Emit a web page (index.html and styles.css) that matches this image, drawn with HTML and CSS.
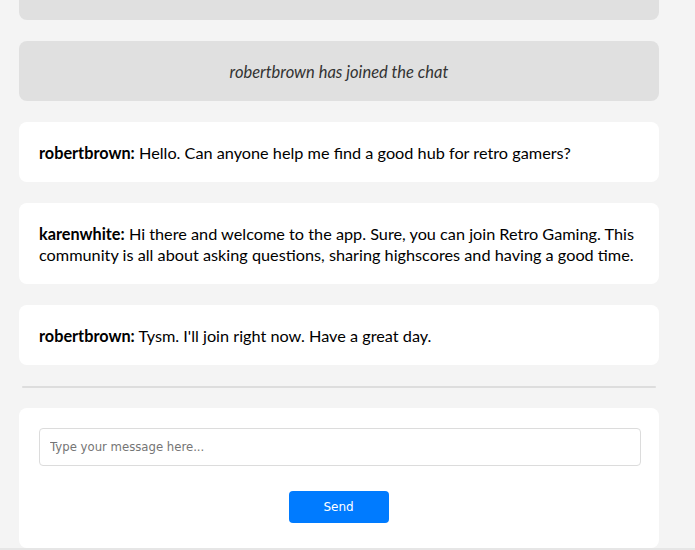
FILE: index.html
```html
<!DOCTYPE html>
<html lang="en">
<head>
<meta charset="utf-8">
<title>Chat</title>
<link rel="stylesheet" href="styles.css">
</head>
<body>
<div class="page">
  <div class="messages">
    <div class="msg system top"><strong>Group chat</strong></div>
    <div class="msg system"><em>robertbrown has joined the chat</em></div>
    <div class="msg"><strong>robertbrown:</strong> Hello. Can anyone help me find a good hub for retro gamers?</div>
    <div class="msg"><strong>karenwhite:</strong> Hi there and welcome to the app. Sure, you can join Retro Gaming. This community is all about asking questions, sharing highscores and having a good time.</div>
    <div class="msg"><strong>robertbrown:</strong> Tysm. I'll join right now. Have a great day.</div>
  </div>
  <div class="divider"></div>
  <form class="composer">
    <input class="field" type="text" placeholder="Type your message here...">
    <button class="send" type="button">Send</button>
  </form>
</div>
</body>
</html>
```
FILE: styles.css
```css
html, body {
  margin: 0;
  padding: 0;
  height: 550px;
  overflow: hidden;
}
body {
  background: #f4f4f4;
  font-family: Lato, "Noto Sans", sans-serif;
  font-size: 16.25px;
  color: #000;
  border-bottom: 2px solid #e6e6e6;
  box-sizing: border-box;
}
.page {
  width: 640px;
  margin-left: 19px;
}
.messages {
  display: flex;
  flex-direction: column;
  gap: 21px;
  margin-top: -40px;
}
.msg {
  background: #fff;
  border-radius: 8px;
  padding: 21.25px 18px 18.25px 20px;
  line-height: 20.5px;
}
.msg strong {
  font-weight: 700;
}
.system {
  background: #e0e0e0;
  text-align: center;
  color: #333;
  padding-left: 20px;
  padding-right: 20px;
  font-size: 16.5px;
}
.system em {
  font-style: italic;
}
.top {
  color: #222;
}
.divider {
  height: 2px;
  background: #dddddd;
  margin: 21px 3px 20px 3px;
  border-radius: 1px;
}
.composer {
  background: #fff;
  border-radius: 8px;
  padding: 20px 18px 25px 20px;
  display: flex;
  flex-direction: column;
  align-items: center;
  gap: 25px;
  margin: 0;
}
.field {
  align-self: stretch;
  box-sizing: border-box;
  height: 38px;
  border: 1px solid #dcdcdc;
  border-radius: 4px;
  padding: 0 10px;
  font-family: "DejaVu Sans", sans-serif;
  font-size: 11.7px;
  color: #333;
  outline: none;
}
.field::placeholder {
  color: #757575;
}
.send {
  width: 100px;
  height: 32px;
  margin-right: 3px;
  background: #007bff;
  color: #fff;
  border: none;
  border-radius: 4px;
  font-family: "DejaVu Sans", sans-serif;
  font-size: 12px;
  cursor: pointer;
}
```
